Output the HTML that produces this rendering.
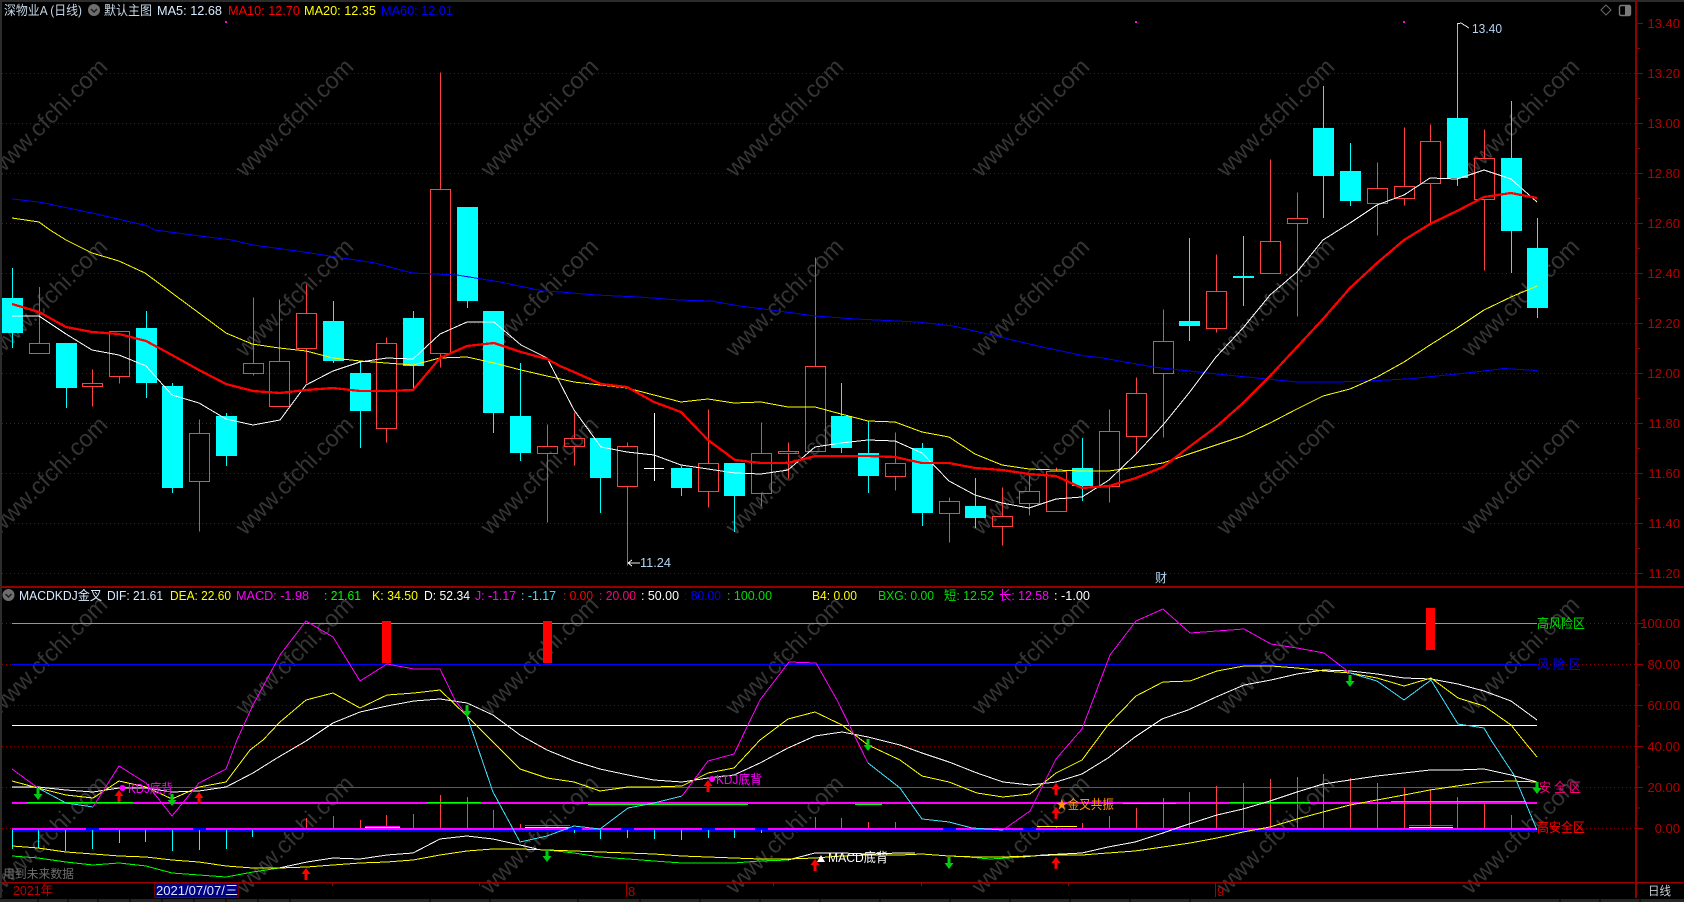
<!DOCTYPE html>
<html lang="zh"><head><meta charset="utf-8"><title>深物业A (日线)</title>
<style>
html,body{margin:0;padding:0;background:#000;width:1684px;height:902px;overflow:hidden}
svg{display:block;font-family:"Liberation Sans","Noto Sans CJK SC",sans-serif}
.l{fill:none;shape-rendering:crispEdges}
</style></head><body>
<svg width="1684" height="902" viewBox="0 0 1684 902" xmlns="http://www.w3.org/2000/svg">
<rect width="1684" height="902" fill="#000"/>
<!-- watermark -->
<g fill="#353535" font-size="23.5">
<text transform="translate(-1 178) rotate(-45)">www.cfchi.com</text><text transform="translate(245 178) rotate(-45)">www.cfchi.com</text><text transform="translate(490 178) rotate(-45)">www.cfchi.com</text><text transform="translate(735 178) rotate(-45)">www.cfchi.com</text><text transform="translate(981 178) rotate(-45)">www.cfchi.com</text><text transform="translate(1226 178) rotate(-45)">www.cfchi.com</text><text transform="translate(1471 178) rotate(-45)">www.cfchi.com</text>
<text transform="translate(-1 358) rotate(-45)">www.cfchi.com</text><text transform="translate(245 358) rotate(-45)">www.cfchi.com</text><text transform="translate(490 358) rotate(-45)">www.cfchi.com</text><text transform="translate(735 358) rotate(-45)">www.cfchi.com</text><text transform="translate(981 358) rotate(-45)">www.cfchi.com</text><text transform="translate(1226 358) rotate(-45)">www.cfchi.com</text><text transform="translate(1471 358) rotate(-45)">www.cfchi.com</text>
<text transform="translate(-1 536) rotate(-45)">www.cfchi.com</text><text transform="translate(245 536) rotate(-45)">www.cfchi.com</text><text transform="translate(490 536) rotate(-45)">www.cfchi.com</text><text transform="translate(735 536) rotate(-45)">www.cfchi.com</text><text transform="translate(981 536) rotate(-45)">www.cfchi.com</text><text transform="translate(1226 536) rotate(-45)">www.cfchi.com</text><text transform="translate(1471 536) rotate(-45)">www.cfchi.com</text>
<text transform="translate(-1 716) rotate(-45)">www.cfchi.com</text><text transform="translate(245 716) rotate(-45)">www.cfchi.com</text><text transform="translate(490 716) rotate(-45)">www.cfchi.com</text><text transform="translate(735 716) rotate(-45)">www.cfchi.com</text><text transform="translate(981 716) rotate(-45)">www.cfchi.com</text><text transform="translate(1226 716) rotate(-45)">www.cfchi.com</text><text transform="translate(1471 716) rotate(-45)">www.cfchi.com</text>
<text transform="translate(-1 895) rotate(-45)">www.cfchi.com</text><text transform="translate(245 895) rotate(-45)">www.cfchi.com</text><text transform="translate(490 895) rotate(-45)">www.cfchi.com</text><text transform="translate(735 895) rotate(-45)">www.cfchi.com</text><text transform="translate(981 895) rotate(-45)">www.cfchi.com</text><text transform="translate(1226 895) rotate(-45)">www.cfchi.com</text><text transform="translate(1471 895) rotate(-45)">www.cfchi.com</text>
</g>
<!-- frame -->
<rect x="0" y="0" width="1684" height="2" fill="#2c2c2c"/>
<rect x="0" y="0" width="2" height="898" fill="#2c2c2c"/>
<!-- grid -->
<path class="l" stroke="#8c0000" stroke-dasharray="1 3" d="M2 73.5H1635M2 123.5H1635M2 173.5H1635M2 223.5H1635M2 273.5H1635M2 323.5H1635M2 373.5H1635M2 423.5H1635M2 473.5H1635M2 523.5H1635M2 573.5H1635M2 623.5H1635M2 664.5H1635M2 705.5H1635M2 746.5H1635M2 787.5H1635M2 828.5H1635"/>
<!-- axes -->
<rect x="2" y="586" width="1682" height="2" fill="#980000"/>
<rect x="2" y="882" width="1682" height="1.5" fill="#980000"/>
<rect x="1635" y="0" width="2" height="898" fill="#900000"/>
<path class="l" stroke="#900000" d="M1636 23.5h7M1636 48.5h4M1636 73.5h7M1636 98.5h4M1636 123.5h7M1636 148.5h4M1636 173.5h7M1636 198.5h4M1636 223.5h7M1636 248.5h4M1636 273.5h7M1636 298.5h4M1636 323.5h7M1636 348.5h4M1636 373.5h7M1636 398.5h4M1636 423.5h7M1636 448.5h4M1636 473.5h7M1636 498.5h4M1636 523.5h7M1636 548.5h4M1636 573.5h7M1636 623.5h7M1636 644h4M1636 664.5h7M1636 685h4M1636 705.5h7M1636 726h4M1636 746.5h7M1636 767h4M1636 787.5h7M1636 808h4M1636 828.5h7"/>
<g fill="#b40000" font-size="13" text-anchor="end">
<text x="1680" y="28">13.40</text><text x="1680" y="78">13.20</text><text x="1680" y="128">13.00</text><text x="1680" y="178">12.80</text><text x="1680" y="228">12.60</text><text x="1680" y="278">12.40</text><text x="1680" y="328">12.20</text><text x="1680" y="378">12.00</text><text x="1680" y="428">11.80</text><text x="1680" y="478">11.60</text><text x="1680" y="528">11.40</text><text x="1680" y="578">11.20</text>
<text x="1680" y="628">100.00</text><text x="1680" y="669">80.00</text><text x="1680" y="710">60.00</text><text x="1680" y="751">40.00</text><text x="1680" y="792">20.00</text><text x="1680" y="833">0.00</text>
</g>
<!-- candles -->
<path class="l" stroke="#ff4040" d="M39.5 287V343.5M29.5 343.5h20v10h-20zM92.5 369.5V383.5M92.5 386.5V406.5M82.5 383.5h20v3h-20zM119.5 376.5V383.5M109.5 331.5h20v45h-20zM199.5 419.5V433.5M199.5 481.5V531.5M189.5 433.5h20v48h-20zM253.5 297.5V363.5M253.5 373.5V375.5M243.5 363.5h20v10h-20zM279.5 299.5V361.5M269.5 361.5h20v45h-20zM306.5 284.5V313.5M306.5 348.5V383.5M296.5 313.5h20v35h-20zM386.5 337.5V343.5M386.5 428.5V442.5M376.5 343.5h20v85h-20zM440.5 72.5V189.5M440.5 353.5V367.5M430.5 189.5h20v164h-20zM547.5 424.5V446.5M547.5 453.5V522.5M537.5 446.5h20v7h-20zM574.5 412.5V438.5M574.5 446.5V465.5M564.5 438.5h20v8h-20zM627.5 442.5V446.5M627.5 486.5V565.5M617.5 446.5h20v40h-20zM708.5 409.5V463.5M708.5 491.5V507.5M698.5 463.5h20v28h-20zM761.5 422.5V453.5M761.5 493.5V506.5M751.5 453.5h20v40h-20zM788.5 442.5V451.5M788.5 453.5V478.5M778.5 451.5h20v2h-20zM815.5 257.5V366.5M805.5 366.5h20v85h-20zM895.5 432.5V463.5M895.5 476.5V490.5M885.5 463.5h20v13h-20zM949.5 497.5V501.5M949.5 513.5V542.5M939.5 501.5h20v12h-20zM1002.5 487.5V516.5M1002.5 526.5V545.5M992.5 516.5h20v10h-20zM1029.5 475.5V491.5M1029.5 503.5V515.5M1019.5 491.5h20v12h-20zM1056.5 467.5V471.5M1046.5 471.5h20v40h-20zM1109.5 409.5V431.5M1109.5 486.5V502.5M1099.5 431.5h20v55h-20zM1136.5 377.5V393.5M1136.5 436.5V453.5M1126.5 393.5h20v43h-20zM1163.5 309.5V341.5M1163.5 373.5V437.5M1153.5 341.5h20v32h-20zM1216.5 254.5V291.5M1216.5 328.5V332.5M1206.5 291.5h20v37h-20zM1270.5 159.5V241.5M1260.5 241.5h20v32h-20zM1297.5 192.5V218.5M1297.5 223.5V316.5M1287.5 218.5h20v5h-20zM1377.5 162.5V188.5M1377.5 203.5V235.5M1367.5 188.5h20v15h-20zM1404.5 127.5V186.5M1404.5 198.5V205.5M1394.5 186.5h20v12h-20zM1430.5 124.5V141.5M1430.5 183.5V224.5M1420.5 141.5h20v42h-20zM1484.5 129.5V158.5M1484.5 199.5V270.5M1474.5 158.5h20v41h-20z"/>
<path class="l" stroke="#00ffff" d="M12.5 268V348M66.5 388V408M146.5 311V398M172.5 383V493M226.5 413V466M333.5 301V363M360.5 361V448M413.5 311V388M467.5 301V308M493.5 413V433M520.5 363V461M600.5 478V513M681.5 466V496M734.5 496V532M841.5 383V453M868.5 421V493M922.5 443V526M975.5 478V528M1082.5 438V501M1189.5 238V341M1243.5 236V306M1323.5 86V218M1350.5 143V206M1457.5 23V186M1511.5 101V273M1537.5 218V318"/>
<g fill="#00ffff" shape-rendering="crispEdges">
<rect x="2" y="298" width="21" height="35"/><rect x="56" y="343" width="21" height="45"/><rect x="136" y="328" width="21" height="55"/><rect x="162" y="386" width="21" height="102"/><rect x="216" y="416" width="21" height="40"/><rect x="323" y="321" width="21" height="40"/><rect x="350" y="373" width="21" height="38"/><rect x="403" y="318" width="21" height="48"/><rect x="457" y="207" width="21" height="94"/><rect x="483" y="311" width="21" height="102"/><rect x="510" y="416" width="21" height="37"/><rect x="590" y="438" width="21" height="40"/><rect x="671" y="468" width="21" height="20"/><rect x="724" y="463" width="21" height="33"/><rect x="831" y="416" width="21" height="32"/><rect x="858" y="453" width="21" height="23"/><rect x="912" y="448" width="21" height="65"/><rect x="965" y="506" width="21" height="12"/><rect x="1072" y="468" width="21" height="18"/><rect x="1179" y="321" width="21" height="5"/><rect x="1233" y="276" width="21" height="2"/><rect x="1313" y="128" width="21" height="48"/><rect x="1340" y="171" width="21" height="30"/><rect x="1447" y="118" width="21" height="60"/><rect x="1501" y="158" width="21" height="73"/><rect x="1527" y="248" width="21" height="60"/>
</g>
<path class="l" stroke="#fff" d="M654.5 413V481M644 468.5H664"/>
<!-- MA lines -->
<polyline class="l" stroke="#0000ff" stroke-width="1" points="12,199 39,202 92,213 146,225.5 155,230 200,236 232,240 253,245 304,252 375,263 412,273 457,275 500,282 543,291 560,292 596,295 639,297 678,300 712,301 739,306 771,310 815,316 856,319 917,322 953,326 996,336 1042,347 1085,356 1100,357.5 1153,367 1207,373 1267,379 1297,382 1337,382 1367,381 1407,379 1467,373 1504,368.5 1537,370.5"/>
<polyline class="l" stroke="#ffff00" stroke-width="1" points="12,218 39,222 50,230 66,240 92,253 119,261 145,273 172,293 199,313 226,333 252,344 279,348 306,351 333,358 360,361 386,363 413,365 440,358 467,357 494,363 521,370 547,376 574,382 600,385 627,388 654,395 681,402 708,399 734,403 761,402 788,407 815,407 841,414 868,421 895,422 922,432 949,437 975,454 1002,465 1029,469 1056,470 1082,471 1109,471 1136,467 1163,463 1189,454 1216,445 1243,436 1270,423 1297,409 1323,396 1350,389 1377,377 1404,362 1430,345 1457,328 1484,310 1511,297 1537,286"/>
<polyline class="l" stroke="#ffffff" stroke-width="1" points="12,316 39,316 66,334 92,350 119,355 146,366 172,395 199,403 226,419 253,425 280,420 306,385 333,371 360,362 387,358 413,359 440,334 467,322 494,322 521,345 547,358 560,383 574,410 601,447 627,452 654,455 681,465 708,469 735,473 761,474 788,470 815,447 841,443 868,440 895,441 922,453 949,481 975,495 1002,503 1029,508 1056,499 1082,497 1109,480 1136,454 1163,425 1189,393 1216,357 1243,328 1270,295 1297,272 1323,240 1350,223 1377,205 1404,195 1430,178 1457,179 1484,170 1511,179 1537,202"/>
<polyline class="l" stroke="#ff0000" stroke-width="2.3" points="12,304 39,312 66,327 92,332 119,334 146,341 172,355 199,370 226,384 253,391 280,393 306,390 333,388 360,391 387,391 413,390 440,358 467,346 494,343 521,352 547,359 560,366 574,372 601,384 627,387 654,402 681,412 708,440 735,460 761,463 788,463 815,456 841,456 868,456 895,457 922,463 949,463 975,468 1002,470 1029,474 1056,476 1082,488 1109,486 1136,478 1163,467 1189,447 1216,427 1243,403 1270,376 1297,347 1323,319 1350,288 1377,263 1404,240 1430,224 1457,211 1484,197 1511,193 1537,198"/>
<!-- extremes -->
<g font-size="13" fill="#b4d4f0">
<text x="1472" y="33" textLength="30" lengthAdjust="spacingAndGlyphs">13.40</text>
<text x="640" y="567" textLength="31" lengthAdjust="spacingAndGlyphs">11.24</text>
<text x="1155" y="582" font-size="12">财</text>
</g>
<path class="l" stroke="#e8e8e8" d="M1457 24L1461 23L1469 28M628 563H640M628 563L632 560M628 563L632 566"/>
<g fill="#ff00ff" shape-rendering="crispEdges"><rect x="225" y="21" width="2" height="2"/><rect x="1135" y="21" width="2" height="2"/><rect x="1403" y="21" width="2" height="2"/></g>
<!-- top legend -->
<g font-size="13">
<text x="4" y="15" fill="#c8d8e8" textLength="78" lengthAdjust="spacingAndGlyphs">深物业A (日线)</text>
<circle cx="94" cy="10" r="6" fill="#6e6e6e"/><path d="M91 9l3 3 3-3" fill="none" stroke="#1a1a1a" stroke-width="1.4"/>
<text x="104" y="15" fill="#c8d8e8" textLength="48" lengthAdjust="spacingAndGlyphs">默认主图</text>
<text x="157" y="15" fill="#d8ecff" textLength="65" lengthAdjust="spacingAndGlyphs">MA5: 12.68</text>
<text x="228" y="15" fill="#ff0000" textLength="72" lengthAdjust="spacingAndGlyphs">MA10: 12.70</text>
<text x="304" y="15" fill="#ffff00" textLength="72" lengthAdjust="spacingAndGlyphs">MA20: 12.35</text>
<text x="381" y="15" fill="#0000ff" textLength="72" lengthAdjust="spacingAndGlyphs">MA60: 12.01</text>
</g>
<path d="M1606 5l5 5-5 5-5-5z" fill="none" stroke="#6a6a6a"/>
<rect x="1619.5" y="5.5" width="11" height="10" rx="1.5" fill="none" stroke="#7a7a7a" stroke-width="1.4"/><rect x="1625" y="6" width="5" height="9" fill="#7a7a7a"/>
<!-- panel 2 levels -->
<g shape-rendering="crispEdges">
<rect x="12" y="623" width="1525" height="1" fill="#00ff00"/>
<rect x="12" y="664" width="1525" height="1" fill="#0000ff"/>
<rect x="12" y="725" width="1525" height="1" fill="#ffffff"/>
<rect x="12" y="787" width="1525" height="1" fill="#ff0080"/>
<rect x="12" y="802" width="1525" height="2" fill="#ff00ff"/>
<rect x="12" y="830" width="1525" height="2" fill="#0000ff"/>
</g>
<!-- histogram -->
<path class="l" stroke="#00ffff" d="M12.5 829V849M38.5 829V848M65.5 829V851M92.5 829V849M119.5 829V843M145.5 829V842M172.5 829V851M199.5 829V850M226.5 829V849M252.5 829V837M574.5 829V833M600.5 829V839M627.5 829V838M654.5 829V839M681.5 829V840M708.5 829V838M734.5 829V838M761.5 829V833"/>
<path class="l" stroke="#ff4040" d="M306.5 828V818M333.5 828V816M360.5 828V820M386.5 828V815M413.5 828V814M440.5 828V795M467.5 828V797M493.5 828V810M520.5 828V824M815.5 828V817M841.5 828V818M868.5 828V822M895.5 828V822M1056.5 828V826M1082.5 828V823M1109.5 828V816M1136.5 828V808M1163.5 828V798M1189.5 828V792M1216.5 828V786M1243.5 828V783M1270.5 828V779M1297.5 828V777M1323.5 828V774M1350.5 828V778M1377.5 828V783M1404.5 828V788M1430.5 828V789M1457.5 828V797M1484.5 828V803M1511.5 828V815"/>
<g shape-rendering="crispEdges">
<rect x="12" y="828" width="1525" height="2" fill="#ff00ff"/>
<path fill="#0000ff" d="M86 828h13v2h-13zM193 828h13v2h-13zM568 828h14v2h-14zM621 828h13v2h-13zM702 828h13v2h-13zM755 828h13v2h-13zM943 828h13v2h-13zM1023 828h13v2h-13z"/>
<path fill="#ff00ff" d="M365 826h35v1h-35zM525 825h45v1h-45zM1409 825h44v1h-44z"/>
<path fill="#ffff00" d="M365 827h35v1h-35zM525 827h45v1h-45zM1037 826h40v1h-40zM1409 827h44v1h-44z"/>
<path fill="#00ff00" d="M27 802h106v1h-106zM427 802h54v1h-54zM588 804h160v1h-160zM855 804h27v1h-27zM1123 803h53v1h-53zM1230 802h80v1h-80zM1391 801h135v1h-135z"/>
</g>
<!-- KDJ -->
<polyline class="l" stroke="#ffffff" stroke-width="1" points="12,787 38,787 66,790 93,792 119,788 146,788 172,792 199,791 226,787 253,773 277,758 306,741 333,723 360,712 387,706 414,701 440,699 467,703 493,715 520,735 547,750 574,761 600,769 628,775 654,780 682,782 708,778 734,775 760,763 788,748 815,736 842,732 868,737 900,745 922,753 949,762 977,773 1003,782 1030,785 1056,782 1082,774 1108,758 1135,737 1162,719 1188,710 1216,697 1244,685 1271,680 1297,674 1324,670 1350,671 1377,674 1404,678 1431,679 1458,684 1484,691 1511,701 1537,720"/>
<polyline class="l" stroke="#ffff00" points="12,781 38,788 66,795 93,798 119,781 146,787 172,799 199,787 226,782 250,750 263,740 280,722 306,700 333,693 360,708 387,695 414,693 440,690 467,716 493,742 520,769 547,778 574,782 600,791 628,787 654,787 682,786 708,773 734,768 760,740 788,719 815,712 842,725 868,745 900,760 922,776 949,782 977,793 1003,797 1030,794 1056,773 1082,760 1108,725 1136,696 1163,682 1190,681 1217,671 1244,666 1271,666 1297,668 1324,671 1350,673 1377,678 1404,686 1431,678 1458,698 1484,706 1511,725 1523,740 1537,757"/>
<polyline class="l" stroke="#ff00ff" points="12,769 38,788"/>
<polyline class="l" stroke="#40e0ff" points="38,788 66,803 93,807"/>
<polyline class="l" stroke="#ff00ff" points="93,807 119,766 146,783 172,816 199,783 226,769 237,740 253,705 280,655 306,621 333,637 341,650 360,681 387,664 414,669 440,669 455,700 467,716"/>
<polyline class="l" stroke="#40e0ff" points="467,716 493,792 520,842 547,836 574,826 600,829 628,808 654,803 682,796"/>
<polyline class="l" stroke="#ff00ff" points="682,796 708,761 734,754 760,700 789,662 816,663 837,700 868,763"/>
<polyline class="l" stroke="#40e0ff" points="868,763 900,788 922,819 949,822 972,828 1003,830"/>
<polyline class="l" stroke="#ff00ff" points="1003,830 1030,811 1056,759 1082,729 1093,700 1110,655 1136,621 1163,609 1190,633 1217,631 1244,629 1271,644 1297,648 1324,653 1350,673"/>
<polyline class="l" stroke="#40e0ff" points="1350,673 1377,681 1404,700 1431,680 1458,724 1484,728 1491,740 1514,775 1537,830"/>
<!-- MACD lines -->
<polyline class="l" stroke="#00ff00" stroke-width="1" points="12,856 38,858 66,862 93,865 119,863 146,866 172,873 199,875 226,877 253,872 279,868"/>
<polyline class="l" stroke="#ffffff" stroke-width="1" points="279,868 307,862 333,858 360,859 387,855 413,853 440,839 467,836 493,839 520,845 537,849"/>
<polyline class="l" stroke="#00ff00" stroke-width="1" points="547,850 574,853 600,857 628,859 654,861 682,863 708,863 734,863 760,861 788,860"/>
<polyline class="l" stroke="#ffffff" stroke-width="1" points="788,860 815,853 842,853 868,854 900,853 915,853"/>
<polyline class="l" stroke="#00ff00" stroke-width="1" points="949,856 969,857 990,859 1023,857"/>
<polyline class="l" stroke="#ffffff" stroke-width="1" points="1023,857 1043,855 1082,853 1108,847 1135,842 1163,833 1177,828 1189,824 1217,815 1243,809 1270,801 1297,792 1323,784 1350,780 1377,776 1404,773 1430,770 1457,770 1484,769 1511,775 1537,782"/>
<polyline class="l" stroke="#ffff00" stroke-width="1" points="12,846 38,848 66,852 93,854 119,856 146,857 172,860 199,862 226,866 253,868 279,868 307,867 333,865 360,863 387,862 413,860 440,855 467,851 493,849 520,849 547,850 574,851 600,852 628,853 654,854 682,856 708,857 734,858 760,859 788,859 815,858 842,856 868,855 900,855 922,854 949,856 977,857 1003,857 1030,856 1056,855 1082,855 1108,853 1135,851 1163,847 1190,843 1217,838 1243,832 1270,827 1297,819 1323,812 1350,805 1377,800 1404,795 1430,790 1457,786 1484,782 1511,781 1537,782"/>
<!-- red bars -->
<g fill="#ff0000" shape-rendering="crispEdges"><rect x="382" y="621" width="9" height="42"/><rect x="543" y="621" width="9" height="42"/><rect x="1426" y="608" width="9" height="42"/></g>
<!-- arrows -->
<g fill="#ff0000">
<path d="M119 790l4.5 6h-3v6h-3v-6h-3zM199 792l4.5 6h-3v6h-3v-6h-3zM306 868l4.5 6h-3v6h-3v-6h-3zM708 780l4.5 6h-3v6h-3v-6h-3zM815 859l4.5 6h-3v6h-3v-6h-3zM1056 783l4.5 6h-3v6h-3v-6h-3zM1056 807l4.5 6h-3v6h-3v-6h-3zM1056 857l4.5 6h-3v6h-3v-6h-3z"/>
</g>
<g fill="#00cc10">
<path d="M38 800l-4.5-6h3v-6h3v6h3zM172 806l-4.5-6h3v-6h3v6h3zM467 717l-4.5-6h3v-6h3v6h3zM547 862l-4.5-6h3v-6h3v6h3zM868 751l-4.5-6h3v-6h3v6h3zM949 869l-4.5-6h3v-6h3v6h3zM1350 687l-4.5-6h3v-6h3v6h3zM1537 794l-4.5-6h3v-6h3v6h3z"/>
</g>
<!-- signal labels -->
<g font-size="13">
<circle cx="122.5" cy="788" r="3" fill="#ff00ff"/><text x="128" y="793" fill="#ff00ff" textLength="45" lengthAdjust="spacingAndGlyphs">KDJ底背</text>
<circle cx="712" cy="779" r="3" fill="#ff00ff"/><text x="716" y="784" fill="#ff00ff" textLength="46" lengthAdjust="spacingAndGlyphs">KDJ底背</text>
<path d="M821 855l4 7h-8z" fill="#fff"/><text x="828" y="862" fill="#ffffff" textLength="60" lengthAdjust="spacingAndGlyphs">MACD底背</text>
<text x="1056" y="809" fill="#ff9900" textLength="58" lengthAdjust="spacingAndGlyphs">★金叉共振</text>
<text x="1537" y="628" fill="#00e000" textLength="48" lengthAdjust="spacingAndGlyphs">高风险区</text>
<text x="1537" y="669" fill="#0000ff" textLength="44" lengthAdjust="spacingAndGlyphs">风 险 区</text>
<text x="1539" y="792" fill="#ff0080" textLength="42" lengthAdjust="spacingAndGlyphs">安 全 区</text>
<text x="1537" y="832" fill="#ff0000" textLength="48" lengthAdjust="spacingAndGlyphs">高安全区</text>
</g>
<!-- panel 2 legend -->
<circle cx="8.5" cy="595" r="6" fill="#6e6e6e"/><path d="M5.5 594l3 3 3-3" fill="none" stroke="#1a1a1a" stroke-width="1.4"/>
<g font-size="13">
<text x="19" y="600" fill="#d8ecff" textLength="83" lengthAdjust="spacingAndGlyphs">MACDKDJ金叉</text>
<text x="107" y="600" fill="#d8ecff" textLength="56" lengthAdjust="spacingAndGlyphs">DIF: 21.61</text>
<text x="170" y="600" fill="#ffff00" textLength="61" lengthAdjust="spacingAndGlyphs">DEA: 22.60</text>
<text x="236" y="600" fill="#ff00ff" textLength="73" lengthAdjust="spacingAndGlyphs">MACD: -1.98</text>
<text x="324" y="600" fill="#00ff00" textLength="37" lengthAdjust="spacingAndGlyphs">: 21.61</text>
<text x="372" y="600" fill="#ffff00" textLength="46" lengthAdjust="spacingAndGlyphs">K: 34.50</text>
<text x="424" y="600" fill="#ffffff" textLength="46" lengthAdjust="spacingAndGlyphs">D: 52.34</text>
<text x="475" y="600" fill="#ff00ff" textLength="41" lengthAdjust="spacingAndGlyphs">J: -1.17</text>
<text x="521" y="600" fill="#40e0ff" textLength="35" lengthAdjust="spacingAndGlyphs">: -1.17</text>
<text x="563" y="600" fill="#ff0000" textLength="30" lengthAdjust="spacingAndGlyphs">: 0.00</text>
<text x="599" y="600" fill="#ff0080" textLength="37" lengthAdjust="spacingAndGlyphs">: 20.00</text>
<text x="641" y="600" fill="#ffffff" textLength="38" lengthAdjust="spacingAndGlyphs">: 50.00</text>
<text x="684" y="600" fill="#0000ff" textLength="37" lengthAdjust="spacingAndGlyphs">: 80.00</text>
<text x="727" y="600" fill="#00e000" textLength="45" lengthAdjust="spacingAndGlyphs">: 100.00</text>
<text x="812" y="600" fill="#ffff00" textLength="45" lengthAdjust="spacingAndGlyphs">B4: 0.00</text>
<text x="878" y="600" fill="#00e000" textLength="56" lengthAdjust="spacingAndGlyphs">BXG: 0.00</text>
<text x="944" y="600" fill="#00e000" textLength="50" lengthAdjust="spacingAndGlyphs">短: 12.52</text>
<text x="999" y="600" fill="#ff00ff" textLength="50" lengthAdjust="spacingAndGlyphs">长: 12.58</text>
<text x="1054" y="600" fill="#ffffff" textLength="36" lengthAdjust="spacingAndGlyphs">: -1.00</text>
</g>
<text x="3" y="878" font-size="12" fill="#6e6e6e" textLength="71" lengthAdjust="spacingAndGlyphs">用到未来数据</text>
<!-- date axis -->
<path class="l" stroke="#a00000" d="M626.5 883V897M1215.5 883V897M332.5 883V886M479.5 883V886M773.5 883V886M921.5 883V886M1068.5 883V886"/>
<rect x="154.5" y="883.5" width="84" height="14" fill="#000080" stroke="#700000"/>
<text x="156" y="895" font-size="13" fill="#d8e8ff" textLength="82" lengthAdjust="spacingAndGlyphs">2021/07/07/三</text>
<text x="13" y="895" font-size="13" fill="#c00000" textLength="40" lengthAdjust="spacingAndGlyphs">2021年</text>
<text x="628" y="896" font-size="13" fill="#c00000">8</text>
<text x="1217" y="896" font-size="13" fill="#c00000">9</text>
<text x="1648" y="895" font-size="12" fill="#c8d0d8" textLength="23" lengthAdjust="spacingAndGlyphs">日线</text>
<!-- bottom strip -->
<rect x="0" y="899" width="1684" height="3" fill="#262626"/>
<path class="l" stroke="#000" d="M38 899v3M68 899v3M98 899v3M130 899v3M162 899v3M194 899v3M226 899v3M258 899v3M290 899v3M430 899v3M490 899v3M578 899v3M640 899v3M700 899v3M760 899v3M820 899v3M880 899v3M950 899v3M1010 899v3M1070 899v3M1130 899v3M1190 899v3M1560 899v3M1600 899v3M1640 899v3"/>
</svg>
</body></html>
